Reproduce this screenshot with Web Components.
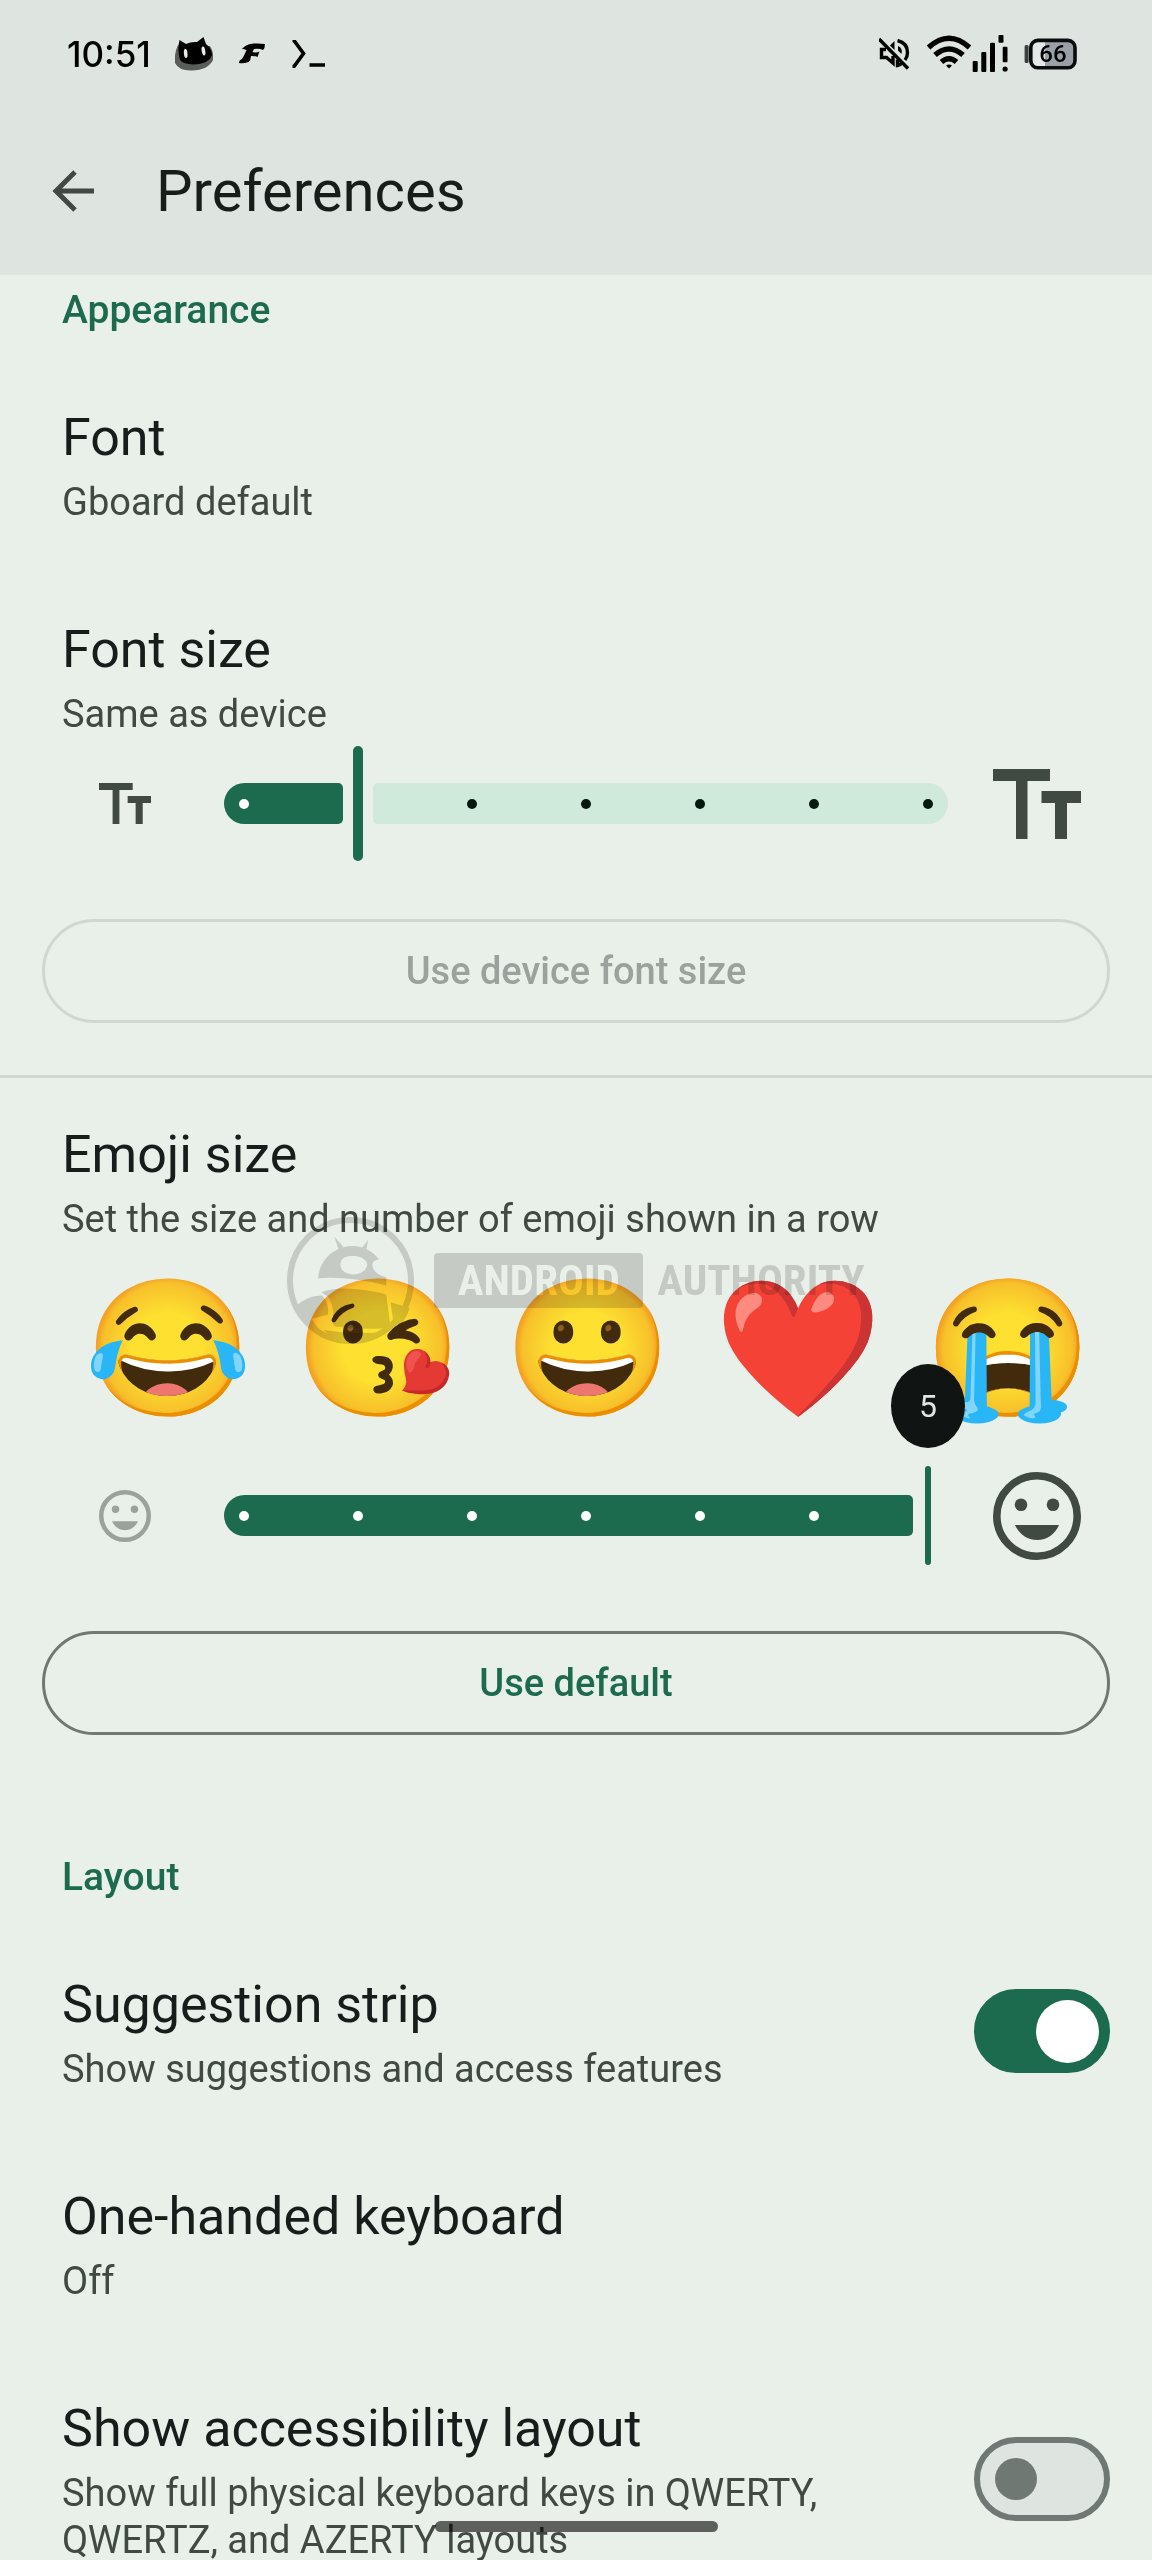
<!DOCTYPE html>
<html lang="en">
<head>
<meta charset="utf-8">
<meta name="viewport" content="width=device-width, initial-scale=1">
<title>Preferences</title>
<style>
  :root {
    --surface: #e9efe9;
    --surface-bar: #dee5e0;
    --ink: #171d1a;
    --ink-soft: #414943;
    --primary: #1c6b4f;
    --primary-soft: #cfe9da;
    --outline: #6f7872;
    --disabled: #9ba19c;
    --line: #d0d7d0;
    --inset: 62px;
    --inset-control: 42px;
  }
  html, body { margin: 0; height: 100%; }
  body {
    background: var(--surface);
    color: var(--ink);
    font-family: Roboto, "Liberation Sans", sans-serif;
    overflow: hidden;
  }
</style>
</head>
<body>
<settings-screen>
  <status-bar slot="header" time="10:51" battery="66"></status-bar>
  <app-bar slot="header">Preferences</app-bar>

  <section-title class="first">Appearance</section-title>
  <pref-item>
    Font
    <span slot="summary">Gboard default</span>
  </pref-item>
  <pref-group>
    Font size
    <span slot="summary">Same as device</span>
    <step-slider slot="control" label="Font size" value="1" max="6" icon="text"></step-slider>
    <pill-button slot="control" disabled>Use device font size</pill-button>
  </pref-group>
  <section-divider></section-divider>
  <pref-group class="after-divider">
    Emoji size
    <span slot="summary">Set the size and number of emoji shown in a row</span>
    <emoji-row slot="control"></emoji-row>
    <step-slider slot="control" label="Emoji size" value="6" max="6" icon="smile" bubble="5"></step-slider>
    <pill-button slot="control">Use default</pill-button>
  </pref-group>

  <section-title>Layout</section-title>
  <pref-item toggle="on">
    Suggestion strip
    <span slot="summary">Show suggestions and access features</span>
  </pref-item>
  <pref-item>
    One-handed keyboard
    <span slot="summary">Off</span>
  </pref-item>
  <pref-item toggle="off">
    Show accessibility layout
    <span slot="summary">Show full physical keyboard keys in QWERTY, QWERTZ, and AZERTY layouts</span>
  </pref-item>

  <water-mark slot="overlay"></water-mark>
  <nav-pill slot="overlay"></nav-pill>
</settings-screen>

<script>
const define = (name, render) => customElements.define(name, class extends HTMLElement {
  constructor() {
    super();
    this.attachShadow({ mode: 'open' });
  }
  connectedCallback() {
    this.shadowRoot.innerHTML = render(this);
  }
});

define('settings-screen', () => `
  <style>
    :host { display: flex; flex-direction: column; position: relative; height: 100vh; overflow: hidden; }
    header { background: var(--surface-bar); flex: none; }
    main { flex: 1; min-height: 0; overflow: hidden; }
  </style>
  <header><slot name="header"></slot></header>
  <main><slot></slot></main>
  <slot name="overlay"></slot>`);

define('status-bar', el => `
  <style>
    :host { display: flex; justify-content: space-between; align-items: center; height: 107px; padding: 0 75px 0 67px; color: #000; }
    div { display: flex; align-items: center; gap: 26px; }
    .notices { gap: 24px; }
    .system { gap: 16px; }
    .net { gap: 0; }
    svg { display: block; flex: none; }
    time { font: 500 35px/44px Inter, Roboto, sans-serif; }
    .battery { display: grid; align-items: center; }
    .battery > * { grid-area: 1 / 1; }
    .battery span { font: 500 24px/32px Roboto, sans-serif; text-align: center; padding-left: 5px; }
  </style>
  <div class="notices">
    <time>${el.getAttribute('time')}</time>
    <div>
    <svg width="38" height="35" viewBox="0 0 38 35">
      <path d="M3 9Q-1 17 0 27Q4 35 17 34.500Q33 34 38 24Q39 16 35 10Z" fill="#5a5e5b"/>
      <path d="M4.500 4L11 8Q16 5.500 22 6L28.500 1L31 8Q37 13 37 19Q34 28 18 28.500Q8 28 5 24Q2 14 4.500 4Z"/>
      <ellipse cx="10.700" cy="17.500" rx="1.800" ry="4.500" fill="#e6ebe7" transform="rotate(-6 10.700 17.500)"/>
      <ellipse cx="28.500" cy="15" rx="1.800" ry="4.500" fill="#e6ebe7" transform="rotate(-10 28.500 15)"/>
    </svg>
    <svg width="26" height="21" viewBox="0 0 26 21">
      <path d="M3 6Q7 1 15 .6Q20 0 26 1Q26 5 24 7Q20 5 15 6L13.500 9Q17 10 20.500 8.500L18.500 14Q15 12.500 12 13Q12 17 9.500 19Q4 21 0 20Q0 17 3 16Q5 13 7.500 7Q5 6 3 6Z"/>
    </svg>
    <svg width="34" height="28" viewBox="0 0 34 28" fill="none" stroke="#000" stroke-width="3.600">
      <path d="M1.500 .5H3L12.500 13.500L3 26.500H1.500M18.500 25H34"/>
    </svg>
    </div>
  </div>
  <div class="system">
    <svg width="31" height="33" viewBox="0 0 31 33" fill="none" stroke="#000" stroke-width="3.400">
      <path d="M0 2L29 31.500"/>
      <path d="M7 12.500H2.500V20.500H7.500L14 26V19" />
      <path d="M11 8.500L15.500 4V13Z" fill="#000" stroke="none"/>
      <path d="M19 9Q24 11 22.500 17L19 13.500Z" fill="#000" stroke="none"/>
      <path d="M18.500 3.500Q28.500 6 28.500 15.500Q28.500 20 26 23M22.500 26.500Q21 28 18.500 28.500V22.500"/>
    </svg>
    <div class="net">
      <svg width="46" height="37" viewBox="0 0 46 37" fill="none" stroke="#000" stroke-width="5.400">
        <path d="M2.500 12.500Q23 -6 43.500 12.500M9 20Q23 8 37 20M15.500 27Q23 20.500 30.500 27"/>
        <path d="M20 30.500Q23 28.500 26 30.500L23 33.500Z" fill="#000" stroke="none"/>
      </svg>
      <svg width="36" height="37" viewBox="0 0 36 37">
        <rect x=".7" y="26" width="5" height="11" rx="1"/><rect x="9.300" y="17" width="5" height="20" rx="1"/>
        <rect x="18" y="7.700" width="5" height="29.300" rx="1"/><rect x="26.500" y="0" width="5" height="7.700" rx="1"/>
        <rect x="30.700" y="11.700" width="4.800" height="15.600" rx="1"/><circle cx="33.100" cy="34" r="2.600"/>
      </svg>
    </div>
    <div class="battery">
      <svg width="53" height="32" viewBox="0 0 53 32">
        <rect x=".6" y="7" width="4" height="18" rx="1.500" fill="#3c3f3d"/>
        <rect x="7" y="2.600" width="44" height="27" rx="6" fill="#9b9fa8"/>
        <path d="M21 3.500H13Q8 3.500 8 9V23Q8 28.500 13 28.500H21Z" fill="#e4e8e6"/>
        <rect x="6.800" y="2.400" width="44.200" height="27.400" rx="7" fill="none" stroke="#0b0c0d" stroke-width="3.600"/>
      </svg>
      <span>${el.getAttribute('battery')}</span>
    </div>
  </div>`);

define('app-bar', () => `
  <style>
    :host { display: flex; align-items: center; gap: 62px; height: 168px; padding: 0 52px; }
    button { appearance: none; border: 0; background: none; padding: 0; margin: 0; color: var(--ink-soft); }
    svg { display: block; }
    h1 { margin: 0; font-size: 58px; font-weight: 400; line-height: 72px; }
  </style>
  <button aria-label="Back">
    <svg width="42" height="42" viewBox="0 0 42 42" fill="none" stroke="currentColor" stroke-width="5">
      <path d="M42 21H4M23 2L4 21L23 40"/>
    </svg>
  </button>
  <h1><slot></slot></h1>`);

define('section-title', () => `
  <style>
    :host { display: block; padding: 118px var(--inset) 25px; }
    :host(.first) { padding-top: 11px; }
    h2 { margin: 0; color: var(--primary); font-size: 39px; font-weight: 500; line-height: 48px; }
  </style>
  <h2><slot></slot></h2>`);

define('section-divider', () => `
  <style>
    :host { display: block; padding-top: 52px; }
    hr { margin: 0; border: 0; height: 3px; background: var(--line); }
  </style>
  <hr>`);

const TEXT_STYLE = `
  .title { font-size: 52px; line-height: 66px; }
  .summary { margin-top: 8px; font-size: 38px; line-height: 47px; color: var(--ink-soft); }`;

define('pref-item', el => {
  const toggle = el.getAttribute('toggle');
  return `
  <style>
    ${TEXT_STYLE}
    :host { display: block; }
    label { display: flex; align-items: center; gap: 48px; padding: 0 var(--inset-control) 2px var(--inset); }
    .text { flex: 1; padding: 46px 0 43px; }
    input {
      appearance: none; flex: none; display: flex; align-items: center; box-sizing: border-box;
      width: 136px; height: 84px; margin: 0; padding: 0 15px;
      border: 6px solid var(--outline); border-radius: 42px; background: var(--surface-bar);
    }
    input::before { content: ""; width: 42px; height: 42px; border-radius: 50%; background: var(--outline); }
    input:checked { justify-content: flex-end; padding: 0 5px; border-color: var(--primary); background: var(--primary); }
    input:checked::before { width: 63px; height: 63px; background: #fff; }
  </style>
  <label>
    <div class="text">
      <div class="title"><slot></slot></div>
      <div class="summary"><slot name="summary"></slot></div>
    </div>
    ${toggle ? `<input type="checkbox" role="switch" ${toggle === 'on' ? 'checked' : ''}>` : ''}
  </label>`;
});

define('pref-group', () => `
  <style>
    ${TEXT_STYLE}
    :host { display: block; padding-top: 46px; }
    :host(.after-divider) { padding-top: 44px; }
    .text { padding: 0 var(--inset); }
  </style>
  <div class="text">
    <div class="title"><slot></slot></div>
    <div class="summary"><slot name="summary"></slot></div>
  </div>
  <slot name="control"></slot>`);

define('emoji-row', () => `
  <style>
    :host {
      display: grid; grid-template-columns: repeat(5, 1fr); align-items: center; justify-items: center;
      height: 203px; padding: 4px 39px 0 63px;
      font: 135px/160px "Noto Color Emoji", sans-serif;
    }
  </style>
  ${['😂', '😘', '😀', '❤️', '😭'].map(e => `<span>${e}</span>`).join('')}`);

const ICONS = {
  text: `<svg viewBox="0 0 88 70"><path d="M0 0H57V12H34.500V70H23V12H0ZM48.500 22H88V34H74V70H62V34H48.500Z"/></svg>`,
  smile: `<svg viewBox="0 0 88 88"><circle cx="44" cy="44" r="40.200" fill="none" stroke="currentColor" stroke-width="7.600"/>
    <circle cx="28" cy="32.700" r="6.300"/><circle cx="60" cy="32.700" r="6.300"/><path d="M22 53H66C62 62 54 68 44 68S26 62 22 53Z"/></svg>`
};

define('step-slider', el => {
  const value = +el.getAttribute('value'), max = +el.getAttribute('max');
  const icon = ICONS[el.getAttribute('icon')], bubble = el.getAttribute('bubble'), full = value === max;
  const dots = Array.from({ length: max + 1 }, (_, i) =>
    `<i class="${i < value ? 'on' : i === value ? 'here' : ''}"></i>`).join('');
  return `
  <style>
    :host { display: grid; grid-template-columns: 52px 1fr 88px; align-items: center; height: 131px; padding: 0 71px 0 99px; color: var(--ink-soft); }
    svg { display: block; width: 100%; fill: currentColor; }
    .small.dim { color: var(--disabled); }
    .slider { position: relative; display: grid; align-items: center; height: 131px; margin: 0 45px 0 73px; }
    .slider > * { grid-area: 1 / 1; }
    .bar {
      --at: calc(20px + (100% - 40px) * ${value} / ${max});
      display: grid; grid-template-columns: calc(var(--at) - 15px) 10px 1fr; column-gap: 10px; align-items: center;
    }
    .done, .rest { height: 41px; }
    .done { background: var(--primary); border-radius: 21px 5px 5px 21px; }
    .rest { background: var(--primary-soft); border-radius: 5px 21px 21px 5px; }
    .thumb { height: 115px; background: var(--primary); border-radius: 5px; }
    .full .thumb { width: 6px; height: 99px; justify-self: center; }
    .full .rest { visibility: hidden; }
    .dots { display: flex; justify-content: space-between; padding: 0 15px; }
    i { width: 10px; height: 10px; border-radius: 50%; background: #05190f; }
    i.on { background: #fff; }
    i.here { visibility: hidden; }
    input { width: 100%; height: 100%; margin: 0; opacity: 0; }
    output {
      position: absolute; right: -17px; bottom: calc(100% + 2px);
      width: 74px; border-radius: 37px / 42px; background: #101513; color: #dfe5e0;
      font-size: 32px; line-height: 84px; text-align: center;
    }
  </style>
  <div class="small ${full ? 'dim' : ''}">${icon}</div>
  <div class="slider">
    <div class="bar ${full ? 'full' : ''}"><div class="done"></div><div class="thumb"></div><div class="rest"></div></div>
    <div class="dots">${dots}</div>
    <input type="range" min="0" max="${max}" value="${value}" aria-label="${el.getAttribute('label')}">
    ${bubble ? `<output>${bubble}</output>` : ''}
  </div>
  <div class="large">${icon}</div>`;
});

define('pill-button', el => `
  <style>
    :host { display: block; padding: 50px var(--inset-control) 0; }
    button {
      appearance: none; display: block; box-sizing: border-box; width: 100%; height: 104px; margin: 0;
      border: 3px solid var(--outline); border-radius: 52px; background: none; color: var(--primary);
      font: 500 38px/48px Roboto, sans-serif;
    }
    button:disabled { border-color: var(--line); color: var(--disabled); }
  </style>
  <button ${el.hasAttribute('disabled') ? 'disabled' : ''}><slot></slot></button>`);

define('water-mark', () => `
  <style>
    :host {
      position: absolute; inset: 0; display: flex; align-items: center; justify-content: center;
      mix-blend-mode: multiply; pointer-events: none; color: #d8d8d8;
      font: 700 43px/55px "Roboto Condensed", Roboto, sans-serif;
    }
    svg { display: block; flex: none; width: 127px; height: 127px; margin-right: 20px; }
    b, span { font-weight: inherit; }
    b { box-sizing: border-box; width: 209px; text-align: center; background: #d8d8d8; color: #fff; border-radius: 4px; margin-right: 14px; }
  </style>
  <svg viewBox="745 320 380 380" fill="currentColor">
    <circle cx="935" cy="510" r="181" fill="none" stroke="currentColor" stroke-width="18"/>
    <path d="M886 378L914 410L900 418ZM988 388L982 418L970 412Z"/>
    <path fill-rule="evenodd" d="M838 503C842 450 885 408 940 407C975 407 1005 425 1020 447Q1003 448 1000 462Q1003 492 1042 500L1042 525Q940 497 838 503ZM905 464C905 440 925 436 945 437C970 438 985 450 985 464C980 485 960 492 942 492C920 490 906 480 905 464Z"/>
    <path d="M848 545Q890 530 940 535Q1000 540 1042 552L1055 650Q1000 660 890 648L882 640Q890 600 870 560Z"/>
    <path d="M770 590Q800 555 850 555Q872 580 868 612L818 625L850 668Q800 650 770 590ZM1055 575L1112 592Q1100 635 1066 655ZM855 658Q940 672 1040 664Q990 698 925 694Q880 688 855 658Z"/>
  </svg>
  <b>ANDROID</b><span>AUTHORITY</span>`);

define('nav-pill', () => `
  <style>
    :host { position: absolute; left: 0; right: 0; bottom: 28px; display: flex; justify-content: center; pointer-events: none; }
    div { width: 283px; height: 11px; border-radius: 6px; background: rgba(0, 0, 0, .6); }
  </style>
  <div></div>`);
</script>
</body>
</html>
